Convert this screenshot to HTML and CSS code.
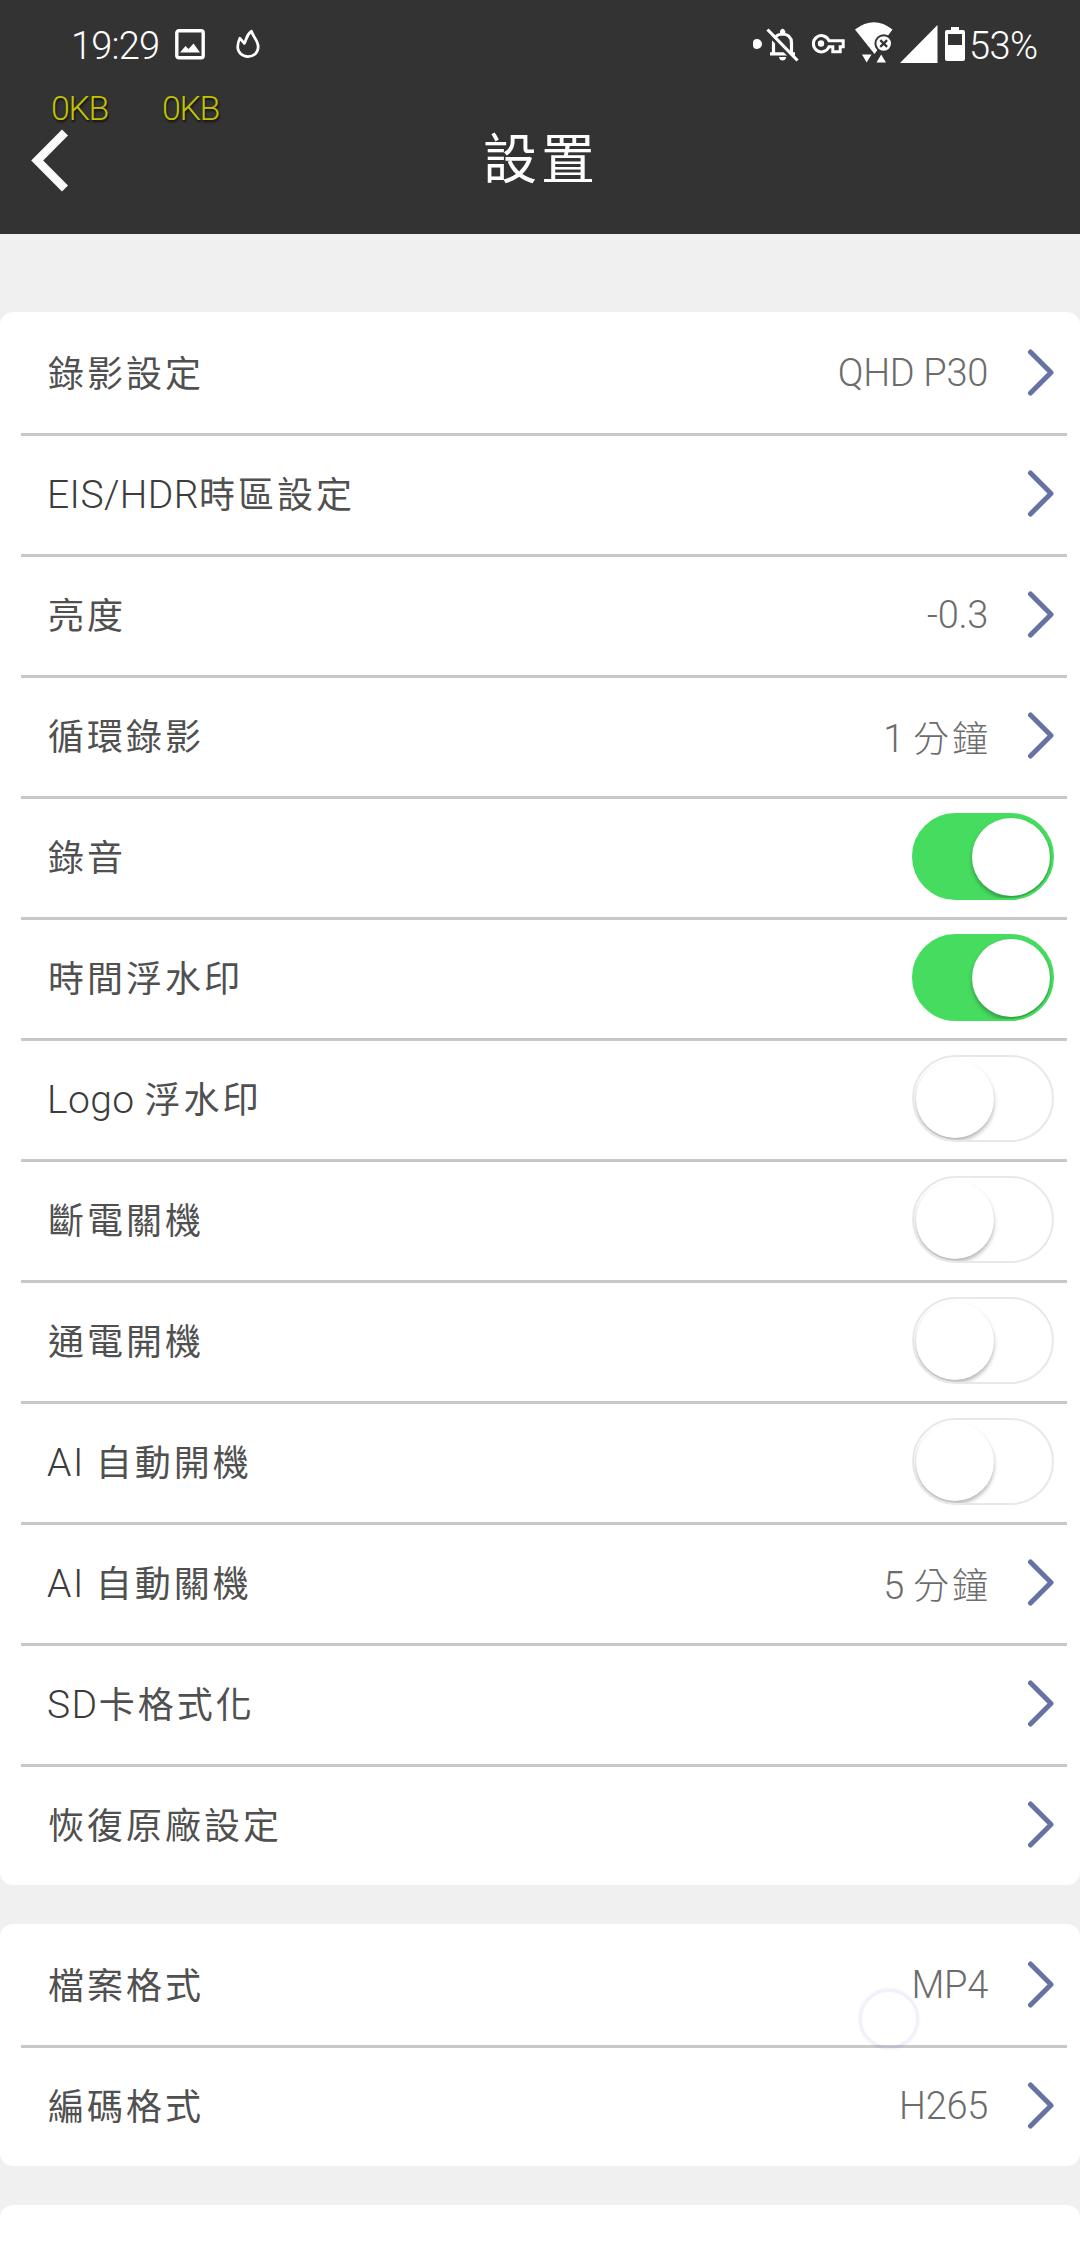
FILE: index.html
```html
<!DOCTYPE html>
<html lang="zh-Hant">
<head>
    <meta charset="UTF-8">
    <meta name="viewport" content="width=device-width, initial-scale=1.0">
    <title>設置</title>
    <link rel="stylesheet" href="styles.css">
</head>
<body>
    <svg width="0" height="0" class="defs">
        <symbol id="arrow" viewBox="0 0 28 49">
            <path d="M3.5 4 L24 24.5 L3.5 45" fill="none" stroke="#6672a4" stroke-width="5" stroke-linecap="round" stroke-linejoin="round"/>
        </symbol>
    </svg>

    <div class="header">
        <div class="status-bar">
            <div class="status-left">
                <span class="clock">19:29</span>
                <svg class="icon-image" width="30" height="31" viewBox="0 0 30 31">
                    <rect x="1.8" y="1.8" width="26.4" height="27" rx="2" fill="none" stroke="#fff" stroke-width="3.4"/>
                    <path d="M5 23.5 L10.5 17 L13.5 20 L18.5 14.5 L25 23.5 Z" fill="#fff"/>
                </svg>
                <svg class="icon-flame" width="24" height="30" viewBox="0 0 24 30">
                    <path d="M15.5 2.2 C17 8 22.2 11.5 22.2 17.8 C22.2 24 17.5 27.6 12 27.6 C6 27.6 1.7 23.5 1.7 17.8 C1.7 14.5 2.6 11.8 3.8 9.2 L8.3 14.4 C10.5 11.5 9.5 6.5 15.5 2.2 Z" fill="none" stroke="#fff" stroke-width="2.7" stroke-linejoin="round"/>
                </svg>
            </div>
            <div class="status-right">
                <span class="dot"></span>
                <svg class="icon-bell" width="33" height="34" viewBox="0 0 33 34">
                    <path d="M7.5 26 V15 Q7.5 6.5 16.5 6 Q25.5 6.5 25.5 15 V26" fill="none" stroke="#fff" stroke-width="3.2"/>
                    <path d="M4 24.2 H29 V27.4 H4 Z M14 3 Q16.5 -1.5 19.3 3 V7 H14 Z M13 29 H20.2 Q19.5 32.6 16.6 32.6 Q13.6 32.6 13 29 Z" fill="#fff"/>
                    <path d="M-0.5 3.5 L29.5 34" stroke="#333" stroke-width="3"/>
                    <path d="M1.5 1.5 L31.5 32.5" stroke="#fff" stroke-width="3.2"/>
                </svg>
                <svg class="icon-key" width="34" height="22" viewBox="0 0 34 22">
                    <path d="M18 7.7 H32.2 V13.8 H29.2 V18.8 H21.8 V13.8 H18 A8.1 8.1 0 1 1 18 7.7 Z" fill="none" stroke="#fff" stroke-width="3"/>
                    <circle cx="10" cy="10.5" r="3.2" fill="#fff"/>
                </svg>
                <svg class="icon-wifi" width="38" height="41" viewBox="0 0 38 41">
                    <path d="M0 7.5 Q19 -7 37.5 7.5 L19.5 32 Z" fill="#fff"/>
                    <path d="M7 32.5 H16.5 L11.7 40.5 Z M21.5 40.5 L26.2 32.5 L31 40.5 Z" fill="#fff"/>
                    <circle cx="28.7" cy="21.5" r="8.3" fill="#fff" stroke="#333" stroke-width="2"/>
                    <path d="M25.3 18.1 L32.1 24.9 M32.1 18.1 L25.3 24.9" stroke="#333" stroke-width="2.2"/>
                </svg>
                <svg class="icon-signal" width="38" height="38" viewBox="0 0 38 38">
                    <path d="M0 38 L37.5 0 V38 Z" fill="#fff"/>
                </svg>
                <svg class="icon-battery" width="20" height="34" viewBox="0 0 20 34">
                    <path d="M6 0 H14 V3 H18 Q20 3 20 5 V32 Q20 34 18 34 H2 Q0 34 0 32 V5 Q0 3 2 3 H6 Z" fill="#fff"/>
                    <rect x="3" y="7" width="14" height="11" fill="#333"/>
                </svg>
                <span class="percent">53%</span>
            </div>
        </div>
        <div class="net-speed">
            <span>0KB</span>
            <span>0KB</span>
        </div>
        <div class="title-bar">
            <svg class="back" width="38" height="63" viewBox="0 0 38 63">
                <path d="M34 3.5 L6.2 31.5 L34 59.5" fill="none" stroke="#fafafa" stroke-width="8.5"/>
            </svg>
            <h1>設置</h1>
        </div>
    </div>

    <div class="card">
        <div class="row">
            <span class="label">錄影設定</span>
            <span class="value">QHD P30</span>
            <svg class="arrow"><use href="#arrow"/></svg>
        </div>
        <div class="row">
            <span class="label"><span class="latin">EIS/HDR</span>時區設定</span>
            <svg class="arrow"><use href="#arrow"/></svg>
        </div>
        <div class="row">
            <span class="label">亮度</span>
            <span class="value">-0.3</span>
            <svg class="arrow"><use href="#arrow"/></svg>
        </div>
        <div class="row">
            <span class="label">循環錄影</span>
            <span class="value">1 <span class="cjk">分鐘</span></span>
            <svg class="arrow"><use href="#arrow"/></svg>
        </div>
        <div class="row">
            <span class="label">錄音</span>
            <span class="toggle on"></span>
        </div>
        <div class="row">
            <span class="label">時間浮水印</span>
            <span class="toggle on"></span>
        </div>
        <div class="row">
            <span class="label"><span class="latin">Logo </span>浮水印</span>
            <span class="toggle"></span>
        </div>
        <div class="row">
            <span class="label">斷電關機</span>
            <span class="toggle"></span>
        </div>
        <div class="row">
            <span class="label">通電開機</span>
            <span class="toggle"></span>
        </div>
        <div class="row">
            <span class="label"><span class="latin wide">AI </span>自動開機</span>
            <span class="toggle"></span>
        </div>
        <div class="row">
            <span class="label"><span class="latin wide">AI </span>自動關機</span>
            <span class="value">5 <span class="cjk">分鐘</span></span>
            <svg class="arrow"><use href="#arrow"/></svg>
        </div>
        <div class="row">
            <span class="label"><span class="latin wide">SD</span>卡格式化</span>
            <svg class="arrow"><use href="#arrow"/></svg>
        </div>
        <div class="row">
            <span class="label">恢復原廠設定</span>
            <svg class="arrow"><use href="#arrow"/></svg>
        </div>
    </div>

    <div class="card">
        <div class="row">
            <span class="label">檔案格式</span>
            <span class="value">MP4</span>
            <svg class="arrow"><use href="#arrow"/></svg>
        </div>
        <div class="row">
            <span class="label">編碼格式</span>
            <span class="value">H265</span>
            <svg class="arrow"><use href="#arrow"/></svg>
        </div>
    </div>

    <div class="card next"></div>

    <div class="touch"></div>
</body>
</html>
```
FILE: styles.css
```css
* {
    box-sizing: border-box;
}
body {
    margin: 0;
    height: 2246px;
    position: relative;
    overflow: hidden;
    background-color: #f0f0f0;
    font-family: Roboto, "Noto Sans CJK TC", sans-serif;
    font-weight: 300;
}
svg {
    display: block;
    flex: none;
}
.defs {
    position: absolute;
}

/* header */
.header {
    position: relative;
    height: 234px;
    margin-bottom: 78px;
    background-color: #333;
    color: #fff;
}
.status-bar {
    display: flex;
    justify-content: space-between;
    height: 88px;
    padding: 0 41px 0 71px;
}
.status-left,
.status-right {
    display: flex;
    align-items: center;
}
.clock,
.percent {
    font-size: 38px;
    line-height: 40px;
    font-weight: 300;
    margin-top: 4px;
}
.clock {
    width: 104px;
    letter-spacing: -0.8px;
}
.icon-flame {
    margin-left: 31px;
}
.dot {
    width: 9px;
    height: 10px;
    border-radius: 4px 5px 5px 4px;
    background-color: #fff;
}
.icon-bell {
    margin-left: 4px;
    margin-top: 2px;
}
.icon-key {
    margin-left: 12px;
}
.icon-wifi {
    margin-left: 10px;
    margin-bottom: 3px;
}
.icon-signal {
    margin-left: 7px;
}
.icon-battery {
    margin-left: 7px;
}
.percent {
    width: 70px;
    margin-left: 4px;
    letter-spacing: -0.6px;
    white-space: nowrap;
}
.net-speed {
    position: absolute;
    left: 51px;
    top: 90px;
    display: flex;
    gap: 51px;
    font-size: 34px;
    line-height: 36px;
    letter-spacing: -1.4px;
    color: #c2c200;
    text-shadow: 1px 2px 2px #111;
}
.net-speed span {
    width: 60px;
}
.title-bar {
    display: grid;
    grid-template-columns: 1fr auto 1fr;
    align-items: center;
    height: 146px;
    padding: 0 29px 2px 31px;
}
h1 {
    margin: 0;
    padding-top: 2px;
    font-size: 54px;
    line-height: 140px;
    font-weight: 400;
    letter-spacing: 4px;
}

/* settings list */
.card {
    margin-bottom: 39px;
    padding: 0 13px 0 21px;
    border-radius: 13px;
    background-color: #fff;
}
.card.next {
    height: 80px;
}
.row {
    display: flex;
    align-items: center;
    height: 121px;
    padding: 0 13px 0 27px;
}
.row + .row {
    border-top: 3px solid #c8c8c8;
    padding-bottom: 3px;
}
.label,
.value {
    white-space: pre;
}
.label {
    flex: 1;
    padding-bottom: 4px;
    font-size: 36px;
    font-weight: 400;
    letter-spacing: 3px;
    color: #505050;
}
.latin {
    font-size: 39px;
    font-weight: 300;
    color: #3c3c3c;
    letter-spacing: 0.4px;
    margin-left: -1px;
}
.wide {
    letter-spacing: 1.5px;
}
.value {
    font-size: 38px;
    letter-spacing: -0.3px;
    color: #6c6c6c;
}
.value .cjk {
    font-size: 36px;
    letter-spacing: 3px;
    margin-right: -3px;
}
.arrow {
    width: 28px;
    height: 49px;
    margin-left: 39px;
    margin-right: -1px;
}

/* switches */
.toggle {
    width: 142px;
    height: 87px;
    padding: 3px;
    border: 2px solid #e8e8e8;
    border-radius: 44px;
    overflow: hidden;
}
.toggle::before {
    content: "";
    display: block;
    width: 78px;
    height: 78px;
    margin-left: -1px;
    border-radius: 50%;
    background-color: #fff;
    box-shadow: 0 3px 4px rgba(0, 0, 0, 0.3);
}
.toggle.on {
    padding-right: 2px;
    background-color: #46dc5f;
    border-color: #46dc5f;
}
.toggle.on::before {
    margin-left: auto;
}

/* touch indicator floating over the list */
.touch {
    position: absolute;
    left: 859px;
    top: 1989px;
    width: 60px;
    height: 60px;
    border: 3px solid rgba(100, 100, 210, 0.09);
    border-radius: 50%;
    box-shadow: 0 0 3px rgba(100, 100, 210, 0.12);
}
```
